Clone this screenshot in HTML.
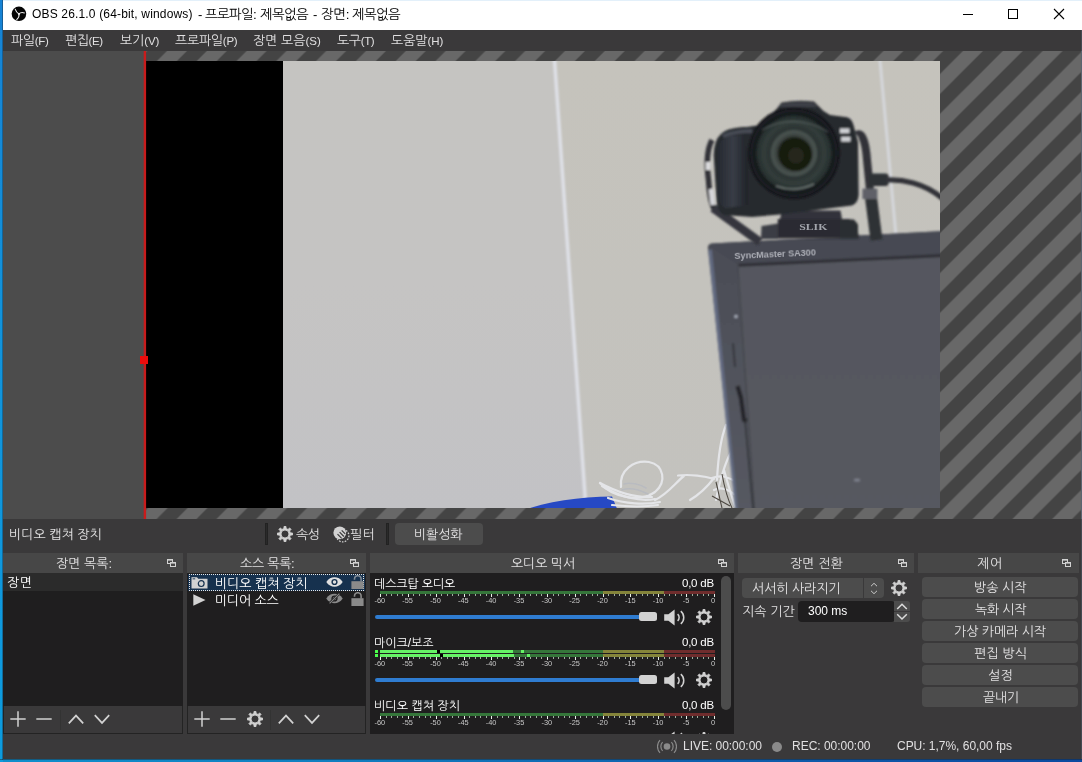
<!DOCTYPE html>
<html lang="ko">
<head>
<meta charset="utf-8">
<title>OBS 26.1.0 (64-bit, windows) - 프로파일: 제목없음 - 장면: 제목없음</title>
<style>
*{box-sizing:border-box;margin:0;padding:0}
html,body{width:1082px;height:762px;overflow:hidden}
body{background:linear-gradient(90deg,#0f8fcc 0,#107fc0 30%,#0f62ae 62%,#0c4aa0 100%);font-family:"Liberation Sans","NanumGothic","Noto Sans CJK KR",sans-serif;font-size:13px;color:#e1e0e1;position:relative}
.abs{position:absolute}
.l{font-size:11.5px}
.t{position:absolute;white-space:pre;line-height:16px;height:16px}
#win{position:absolute;left:3px;top:0;width:1079px;height:759px;background:#3a393a;overflow:hidden;transform:translateZ(0);will-change:transform}
#title{position:absolute;left:0;top:0;width:1079px;height:30px;background:#fff;color:#000}
#menu{position:absolute;left:0;top:30px;width:1079px;height:21px;background:#3a393a}
#preview{position:absolute;left:0;top:51px;width:1079px;height:468px;background:#4c4c4c;overflow:hidden}
#ctx{position:absolute;left:0;top:519px;width:1079px;height:34px;background:#3a393a}
.dock{position:absolute;top:553px;height:181px}
.dtitle{position:absolute;left:0;top:0;right:0;height:20px;background:#474747}
.dbody{position:absolute;left:0;top:20px;right:0;bottom:0;background:#1f1e1f}
.tb{position:absolute;left:0;right:0;bottom:0;height:28px;background:#3a393a;border:1px solid #232323;border-top:none}
.btn{position:absolute;background:#4c4c4c;border-radius:4px}
#status{position:absolute;left:0;top:734px;width:1079px;height:25px;background:#3a393a}
</style>
</head>
<body>
<div class="abs" style="left:0;top:0;width:3px;height:762px;background:linear-gradient(180deg,#1682d4 0,#1292da 40%,#0d9cde 100%)"></div>
<div class="abs" style="left:0;top:759px;width:1082px;height:1px;background:rgba(20,30,40,0.45)"></div>
<div class="abs" style="left:2px;top:0;width:1px;height:760px;background:rgba(20,40,60,0.4)"></div>
<div id="win">

<div id="title"><div class="abs" style="left:0;top:0;width:1079px;height:1px;background:#e3f0fa"></div>
<svg class="abs" style="left:8px;top:6px" width="16" height="16" viewBox="11 6 16 16"><circle cx="18.95" cy="13.8" r="7.3" fill="#050505"/><g fill="none" stroke="#f0f0f0" stroke-width="1.05" stroke-linecap="round"><path d="M18.97 13.95Q16.4 12.6 15.3 9.3"/><path d="M18.97 13.95Q21 11.6 24.4 12.9"/><path d="M18.97 13.95Q19.6 17.3 16.7 19.6"/></g><circle cx="18.97" cy="13.95" r="0.9" fill="#f0f0f0"/></svg>
<div class="t" style="left:29px;top:6px;font-size:12px;letter-spacing:0.163px;color:#000;">OBS 26.1.0 (64-bit, windows)</div>
<div class="t" style="left:195px;top:7px;font-size:13px;color:#000;">-</div>
<div class="t" style="left:202px;top:7px;font-size:13.5px;letter-spacing:-0.700px;color:#000;">프로파일:</div>
<div class="t" style="left:257px;top:7px;font-size:13.5px;letter-spacing:-0.700px;color:#000;">제목없음</div>
<div class="t" style="left:310px;top:7px;font-size:13px;color:#000;">-</div>
<div class="t" style="left:318px;top:7px;font-size:13.5px;letter-spacing:-0.350px;color:#000;">장면:</div>
<div class="t" style="left:349px;top:7px;font-size:13.5px;letter-spacing:-0.700px;color:#000;">제목없음</div>
<svg class="abs" style="left:952px;top:0" width="127" height="30"><path d="M8 14.5H18" stroke="#000" stroke-width="1"/><rect x="53.5" y="9.5" width="9" height="9" fill="none" stroke="#000"/><path d="M99 9L109 19M109 9L99 19" stroke="#000" stroke-width="1.1"/></svg>
</div>
<div id="menu">
<div class="t" style="left:8px;top:3px;font-size:13px;letter-spacing:-0.350px;">파일<span class="l">(F)</span></div>
<div class="t" style="left:62px;top:3px;font-size:13px;letter-spacing:-0.450px;">편집<span class="l">(E)</span></div>
<div class="t" style="left:117px;top:3px;font-size:13px;letter-spacing:-0.100px;">보기<span class="l">(V)</span></div>
<div class="t" style="left:172px;top:3px;font-size:13px;letter-spacing:-0.267px;">프로파일<span class="l">(P)</span></div>
<div class="t" style="left:250px;top:3px;font-size:13px;letter-spacing:-0.014px;">장면 모음<span class="l">(S)</span></div>
<div class="t" style="left:334px;top:3px;font-size:13px;letter-spacing:-0.375px;">도구<span class="l">(T)</span></div>
<div class="t" style="left:388px;top:3px;font-size:13px;letter-spacing:-0.040px;">도움말<span class="l">(H)</span></div>
</div>
<div id="preview">
<svg class="abs" style="left:0;top:0" width="1079" height="468" viewBox="3 51 1079 468">
<defs>
<pattern id="stripe" patternUnits="userSpaceOnUse" x="0" y="0" width="39.8" height="39.8"><rect width="39.8" height="39.8" fill="#444444"/><path d="M28.950 -39.800L-39.800 28.950M68.750 -39.800L-39.800 68.750M108.550 -39.800L-39.800 108.550M148.350 -39.800L-39.800 148.350" stroke="#686868" stroke-width="14.071" fill="none"/></pattern>
<clipPath id="photo"><rect x="283" y="61" width="657" height="447"/></clipPath>
<linearGradient id="wallL" x1="0" y1="0" x2="0" y2="1"><stop offset="0" stop-color="#c5c4c1"/><stop offset="0.5" stop-color="#c5c4c3"/><stop offset="1" stop-color="#c2c2c5"/></linearGradient>
<linearGradient id="wallR" x1="0" y1="0" x2="0" y2="1"><stop offset="0" stop-color="#c5c3bc"/><stop offset="1" stop-color="#c3c2be"/></linearGradient>
<radialGradient id="lens" cx="0.5" cy="0.5" r="0.5"><stop offset="0" stop-color="#15160f"/><stop offset="0.34" stop-color="#1b1d17"/><stop offset="0.40" stop-color="#3a413e"/><stop offset="0.50" stop-color="#4b5552"/><stop offset="0.56" stop-color="#2b3332"/><stop offset="0.70" stop-color="#323d3b"/><stop offset="0.84" stop-color="#27302f"/><stop offset="0.90" stop-color="#15181b"/><stop offset="1" stop-color="#1d2025"/></radialGradient>
<linearGradient id="screen" x1="0" y1="0" x2="0" y2="1"><stop offset="0" stop-color="#54565e"/><stop offset="0.5" stop-color="#56585f"/><stop offset="1" stop-color="#585a60"/></linearGradient>
<linearGradient id="bezel" x1="0" y1="0" x2="0" y2="1"><stop offset="0" stop-color="#4a4c55"/><stop offset="0.4" stop-color="#50525b"/><stop offset="1" stop-color="#575a63"/></linearGradient>
<linearGradient id="grip" x1="0" y1="0" x2="1" y2="0"><stop offset="0" stop-color="#262a31"/><stop offset="0.5" stop-color="#3a3f49"/><stop offset="1" stop-color="#1f2227"/></linearGradient>
<filter id="b1" x="-10%" y="-10%" width="120%" height="120%"><feGaussianBlur stdDeviation="0.7"/></filter>
<filter id="b3" x="-10%" y="-10%" width="120%" height="120%"><feGaussianBlur stdDeviation="0.9"/></filter>
<filter id="b2" x="-10%" y="-10%" width="120%" height="120%"><feGaussianBlur stdDeviation="1.1"/></filter>
</defs>
<rect x="146" y="51" width="936" height="468" fill="url(#stripe)"/>
<rect x="146" y="61" width="137" height="447" fill="#000"/>
<g clip-path="url(#photo)">
<rect x="283" y="61" width="657" height="447" fill="url(#wallR)"/>
<path d="M283 61H553.5L586 508H283Z" fill="url(#wallL)"/>
<g filter="url(#b3)">
<path d="M554.3 57L585.4 501" stroke="#dfe1e8" stroke-width="3.4" fill="none"/>
<path d="M879.7 57L896 236" stroke="#d6d8dd" stroke-width="2.8" fill="none"/>
</g>
<path d="M510 516C535 503 575 497 612 496.5L620 516Z" fill="#2849c4" filter="url(#b1)"/>
<g fill="none" stroke="#e4e5e8" stroke-width="2.2" stroke-linecap="round" filter="url(#b1)">
<path d="M621 487C619 470 634 460 649 462C664 465 667 482 655 492C640 503 612 497 600 483"/>
<path d="M600 483C615 491 635 498 652 497M602 486C620 497 640 502 655 499M608 498C625 504 645 505 660 502M612 505C630 507 645 507 658 505"/>
<path d="M624 484C630 482 640 484 646 488M622 490C630 487 640 490 648 494" stroke="#b9bbc0" stroke-width="1.6"/>
<path d="M655 500C668 494 676 482 684 476M678 475.5C690 474 705 476 714 479M690 500C700 494 708 486 714 478"/>
<path d="M717 480C718 460 720 440 726 425M716 500C720 480 724 465 731 452M724 470C728 485 732 497 735 506M712 478C722 474 728 478 733 480M714 490C722 486 728 490 734 494"/>
</g>
<path d="M640 506.5H712" stroke="#2a2a2c" stroke-width="2" filter="url(#b1)"/>
<path d="M716 482C718 490 720 500 722 508M722 474C724 485 728 500 732 508M712 496L730 506" stroke="#4d4842" stroke-width="1.1" fill="none" filter="url(#b1)"/>
<g filter="url(#b2)">
<path d="M708 249Q707 244 712 243.5L962 230V530H737.5L735.5 510Z" fill="url(#bezel)"/>
<path d="M709 246Q709 244 712 243.5L962 230V255L738.3 265Z" fill="#474952"/>
<path d="M708.3 250L711.8 249.5L740 530H737Z" fill="#68728c" opacity="0.8"/>
<path d="M738.3 264.8L962 254.3V530H756Z" fill="url(#screen)"/>
<path d="M738.5 265.2L962 254.7" stroke="#2d2e34" stroke-width="3" fill="none"/>
<path d="M737.5 262.5L756 530" stroke="#46484f" stroke-width="1.6" fill="none"/>
<path d="M737.5 386L741 398L744 420L747 421" stroke="#26272b" stroke-width="4.5" fill="none" stroke-linejoin="round"/>
<path d="M745 420L754.5 525" stroke="#2f3035" stroke-width="1.6" fill="none"/>
<path d="M733 343L735 367" stroke="#35373d" stroke-width="2" fill="none"/>
<circle cx="736" cy="316.5" r="1.7" fill="#a4a9b6"/>
<ellipse cx="857" cy="480" rx="3" ry="1.5" fill="#7d808c"/>
</g>
<text x="734.5" y="259" font-family="Liberation Sans,sans-serif" font-weight="bold" font-size="9.5" fill="#aeb0b8" textLength="81.5" lengthAdjust="spacingAndGlyphs" transform="rotate(-2.6 734.5 259)" filter="url(#b1)">SyncMaster SA300</text>
<g filter="url(#b3)">
<path d="M712 140C706.5 150 706.5 165 708.5 180C709.5 195 711 205 715 210" fill="none" stroke="#303237" stroke-width="5.5"/>
<path d="M713 208L760 242" fill="none" stroke="#34363c" stroke-width="8.5"/>
<rect x="705.8" y="162" width="4.6" height="8" fill="#dcdcde"/><rect x="709.6" y="189" width="4.6" height="16" fill="#d6d6da" transform="rotate(-7 712 197)"/>
<path d="M857 135C863 131 866 146 867 160L870 190" fill="none" stroke="#303237" stroke-width="8"/>
<path d="M870 190L876.5 240" fill="none" stroke="#2e3035" stroke-width="12"/>
<rect x="862.4" y="188.6" width="15" height="10.5" fill="#5e6068"/>
<rect x="869" y="173.6" width="19.5" height="12.4" rx="3" fill="#2f3136"/>
<path d="M886 180C902 179 924 183 942 198L958 212" fill="none" stroke="#303237" stroke-width="5.2"/>
<path d="M782 210.5h58.5l1.5 8.5h-62z" fill="#30333a"/>
<path d="M777.8 219h72.2l1 3.5l6 2l2 14h-81.2z" fill="#292b30"/>
<path d="M761.5 226l16.5-2.5v15.5h-17z" fill="#3a3d45"/>
<path d="M840 219.6h14l4 5v14h-18z" fill="#2b2d33"/>
<path d="M721 134C726 129 736 127 747 127L760 125L777 108.5L781.5 102.5Q797 99.5 814 101.5L823.5 111L830 115L847 117.3Q852 119 853.5 125L858 142L858.7 195Q858 203 852 205.5L780 214.5L752 217L724 215Q717.5 212 716.5 201L713.7 155Q714 140 721 134Z" fill="#282a2f"/>
<path d="M718 150Q720 138 730 136L745 135Q749 160 748 205L726 208Q719 206 718.5 196Z" fill="url(#grip)" opacity="0.9"/>
<path d="M722 134.5Q735 129 752 129L752 133Q735 133 724 138Z" fill="#474b55"/>
<path d="M782 103.5Q797 100.5 813 102.5L818 107H779Z" fill="#3d4047"/>
<circle cx="794" cy="153.2" r="46.2" fill="#17191d"/>
<circle cx="794" cy="153.2" r="43.5" fill="url(#lens)"/>
<circle cx="795.5" cy="154.5" r="16.5" fill="#181a11"/>
<circle cx="796" cy="155.5" r="8" fill="#25271b"/>
<path d="M776 186Q795 193 814 184" stroke="#9aa19f" stroke-width="1.4" fill="none" opacity="0.6"/>
<path d="M762 130Q795 112 828 132" stroke="#7d8583" stroke-width="1.2" fill="none" opacity="0.45"/>
<rect x="840" y="128.4" width="9.5" height="4.8" fill="#d0d1d5"/><rect x="841.2" y="136.8" width="9.3" height="4.8" fill="#d0d1d5"/>
</g>
<text x="799.3" y="229.8" font-family="Liberation Serif,serif" font-weight="bold" font-size="8.6" fill="#a3a5ac" textLength="28" lengthAdjust="spacingAndGlyphs" filter="url(#b1)">SLIK</text>
</g>
<rect x="143.7" y="51" width="2.4" height="468" fill="#c81c1c"/>
<rect x="140" y="356" width="8" height="8" fill="#ee0c0c"/>
</svg>
</div>
<div id="ctx">
<div class="t" style="left:6px;top:8px;font-size:13px;">비디오 캡쳐 장치</div>
<div class="abs" style="left:262px;top:4px;width:3px;height:22px;background:#2a2a2a;border:1px solid #222"></div>
<svg class="abs" style="left:274.3px;top:7px" width="16" height="16" viewBox="0 0 16 16"><path d="M6.93,2.61 L6.99,0.47 L9.01,0.47 L9.07,2.61 L11.06,3.43 L12.61,1.96 L14.04,3.39 L12.57,4.94 L13.39,6.93 L15.53,6.99 L15.53,9.01 L13.39,9.07 L12.57,11.06 L14.04,12.61 L12.61,14.04 L11.06,12.57 L9.07,13.39 L9.01,15.53 L6.99,15.53 L6.93,13.39 L4.94,12.57 L3.39,14.04 L1.96,12.61 L3.43,11.06 L2.61,9.07 L0.47,9.01 L0.47,6.99 L2.61,6.93 L3.43,4.94 L1.96,3.39 L3.39,1.96 L4.94,3.43Z M4.00,8.00 a4.0,4.0 0 1,0 8.0,0 a4.0,4.0 0 1,0 -8.0,0Z" fill="#d2d2d2" fill-rule="evenodd" stroke="#d2d2d2" stroke-width="0.9" stroke-linejoin="round"/></svg>
<div class="t" style="left:293px;top:8px;font-size:13px;letter-spacing:-0.700px;">속성</div>
<svg class="abs" style="left:330px;top:7px" width="17" height="17" viewBox="0 0 17 17"><circle cx="9.7" cy="9.7" r="6.2" fill="none" stroke="#d2d2d2" stroke-width="1.3" stroke-dasharray="1.6 1.3"/><circle cx="6.8" cy="6.8" r="6.4" fill="#d2d2d2"/><path d="M4.5 8.2l4.2 4.2M6.6 6.2l4.3 4.3M8.7 4.3l3.5 3.5" stroke="#3a393a" stroke-width="1.2"/></svg>
<div class="t" style="left:347px;top:8px;font-size:13px;letter-spacing:0.700px;">필터</div>
<div class="abs" style="left:383px;top:4px;width:3px;height:22px;background:#2a2a2a;border:1px solid #222"></div>
<div class="btn" style="left:392px;top:4px;width:88px;height:22px"></div>
<div class="t" style="left:411px;top:8px;font-size:13px;letter-spacing:-0.100px;">비활성화</div>
</div>
<div class="dock" style="left:0px;width:180px"><div class="dtitle"><div class="t" style="left:53px;top:3px;font-size:13px;letter-spacing:-0.020px;">장면 목록:</div><svg class="abs" style="left:163.5px;top:5.6px" width="9" height="8" viewBox="0 0 9 8"><rect x="0.5" y="0.5" width="5" height="4" fill="none" stroke="#d2d2d2"/><rect x="0" y="0" width="6" height="1.6" fill="#d2d2d2"/><rect x="3.5" y="3.5" width="5" height="4" fill="#474747" stroke="#d2d2d2"/><rect x="3" y="3" width="6" height="1.6" fill="#d2d2d2"/></svg></div><div class="dbody"><div class="abs" style="left:0;top:0;right:0;height:18px;background:#2b2b2b"></div><div class="t" style="left:4px;top:2px;font-size:13px;letter-spacing:0.700px;color:#fff;">장면</div><div class="tb"><svg class="abs" style="left:6px;top:5px" width="16" height="16"><path d="M8 0.3V15.7M0.3 8H15.7" stroke="#d2d2d2" stroke-width="1.5" fill="none"/></svg><svg class="abs" style="left:32px;top:5px" width="16" height="16"><path d="M0.3 8H15.7" stroke="#d2d2d2" stroke-width="1.5" fill="none"/></svg><div class="abs" style="left:56px;top:4px;width:1px;height:20px;background:#333"></div><svg class="abs" style="left:64px;top:5px" width="16" height="16"><path d="M0.8 12.3L8 4.6L15.2 12.3" stroke="#d2d2d2" stroke-width="1.7" fill="none"/></svg><svg class="abs" style="left:90px;top:5px" width="16" height="16"><path d="M0.8 4.2L8 11.9L15.2 4.2" stroke="#d2d2d2" stroke-width="1.7" fill="none"/></svg></div></div></div>
<div class="dock" style="left:184px;width:179px"><div class="dtitle"><div class="t" style="left:53px;top:3px;font-size:13px;letter-spacing:-0.280px;">소스 목록:</div><svg class="abs" style="left:162.5px;top:5.6px" width="9" height="8" viewBox="0 0 9 8"><rect x="0.5" y="0.5" width="5" height="4" fill="none" stroke="#d2d2d2"/><rect x="0" y="0" width="6" height="1.6" fill="#d2d2d2"/><rect x="3.5" y="3.5" width="5" height="4" fill="#474747" stroke="#d2d2d2"/><rect x="3" y="3" width="6" height="1.6" fill="#d2d2d2"/></svg></div><div class="dbody"><div class="abs" style="left:1px;top:0.5px;width:176.5px;height:17.7px;background:#16314e"></div><div class="abs" style="left:1.5px;top:1px;width:175.5px;height:17px;border:1px dotted #e8e8e8"></div><div class="abs" style="left:1px;top:18px;right:1px;height:17px;background:#1f1e1f"></div><svg class="abs" style="left:3.7px;top:2.6px" width="17" height="13" viewBox="0 0 17 13"><path d="M0.5 1.2h5.5l1.2 1.6h9.3v9.7h-16z" fill="#d2d2d2"/><circle cx="10.2" cy="7.6" r="2.9" fill="none" stroke="#16314e" stroke-width="1.2"/><rect x="1.6" y="2.4" width="2.6" height="0.9" fill="#16314e"/></svg><div class="t" style="left:28px;top:3px;font-size:13px;letter-spacing:-0.038px;color:#fff;">비디오 캡쳐 장치</div><svg class="abs" style="left:138.60000000000002px;top:3.8px" width="17" height="10" viewBox="0 0 17 10"><path d="M0.3 5C2.5 1.6 5.3 0.3 8.5 0.3S14.5 1.6 16.7 5C14.5 8.4 11.7 9.7 8.5 9.7S2.5 8.4 0.3 5Z" fill="#e0e0e0"/><circle cx="8.5" cy="5" r="3.1" fill="#16314e"/><circle cx="8.5" cy="5" r="1.7" fill="#e0e0e0"/></svg><svg class="abs" style="left:163.5px;top:2px" width="13" height="14" viewBox="0 0 13 14"><rect x="0.4" y="6.2" width="12.2" height="7.8" fill="#8a8a8a"/><path d="M10.1 6.4V4a3.3 3.3 0 0 0 -6.6 0V4.8" fill="none" stroke="#808a95" stroke-width="1.6"/></svg><svg class="abs" style="left:5.5px;top:20.5px" width="13" height="12" viewBox="0 0 13 12"><path d="M0.3 0.3L12.5 6L0.3 11.7Z" fill="#d2d2d2"/></svg><div class="t" style="left:28px;top:20px;font-size:13px;letter-spacing:-0.220px;color:#fff;">미디어 소스</div><svg class="abs" style="left:138.60000000000002px;top:20.3px" width="17" height="11" viewBox="0 0 17 11"><path d="M0.3 5.5C2.5 2.1 5.3 0.8 8.5 0.8S14.5 2.1 16.7 5.5C14.5 8.9 11.7 10.2 8.5 10.2S2.5 8.9 0.3 5.5Z" fill="#8a8a8a"/><circle cx="8.5" cy="5.5" r="3.1" fill="#1f1e1f"/><circle cx="8.5" cy="5.5" r="1.7" fill="#8a8a8a"/><path d="M3.2 10.6L13.6 0.4" stroke="#1f1e1f" stroke-width="2.4"/><path d="M3.6 10.4L13.4 0.6" stroke="#8a8a8a" stroke-width="1.1"/></svg><svg class="abs" style="left:163.5px;top:19px" width="13" height="14" viewBox="0 0 13 14"><rect x="0.4" y="6.2" width="12.2" height="7.8" fill="#8a8a8a"/><path d="M10.1 6.4V4a3.3 3.3 0 0 0 -6.6 0V4.8" fill="none" stroke="#8a8a8a" stroke-width="1.6"/></svg><div class="tb"><svg class="abs" style="left:6px;top:5px" width="16" height="16"><path d="M8 0.3V15.7M0.3 8H15.7" stroke="#d2d2d2" stroke-width="1.5" fill="none"/></svg><svg class="abs" style="left:32px;top:5px" width="16" height="16"><path d="M0.3 8H15.7" stroke="#d2d2d2" stroke-width="1.5" fill="none"/></svg><svg class="abs" style="left:58.5px;top:5px" width="16" height="16" viewBox="0 0 16 16"><path d="M6.93,2.61 L6.99,0.47 L9.01,0.47 L9.07,2.61 L11.06,3.43 L12.61,1.96 L14.04,3.39 L12.57,4.94 L13.39,6.93 L15.53,6.99 L15.53,9.01 L13.39,9.07 L12.57,11.06 L14.04,12.61 L12.61,14.04 L11.06,12.57 L9.07,13.39 L9.01,15.53 L6.99,15.53 L6.93,13.39 L4.94,12.57 L3.39,14.04 L1.96,12.61 L3.43,11.06 L2.61,9.07 L0.47,9.01 L0.47,6.99 L2.61,6.93 L3.43,4.94 L1.96,3.39 L3.39,1.96 L4.94,3.43Z M4.00,8.00 a4.0,4.0 0 1,0 8.0,0 a4.0,4.0 0 1,0 -8.0,0Z" fill="#d2d2d2" fill-rule="evenodd" stroke="#d2d2d2" stroke-width="0.9" stroke-linejoin="round"/></svg><div class="abs" style="left:82px;top:4px;width:1px;height:20px;background:#333"></div><svg class="abs" style="left:90px;top:5px" width="16" height="16"><path d="M0.8 12.3L8 4.6L15.2 12.3" stroke="#d2d2d2" stroke-width="1.7" fill="none"/></svg><svg class="abs" style="left:116px;top:5px" width="16" height="16"><path d="M0.8 4.2L8 11.9L15.2 4.2" stroke="#d2d2d2" stroke-width="1.7" fill="none"/></svg></div></div></div>
<div class="dock" style="left:367px;width:364px"><div class="dtitle"><div class="t" style="left:141px;top:3px;font-size:13px;letter-spacing:-0.120px;">오디오 믹서</div><svg class="abs" style="left:347.5px;top:5.6px" width="9" height="8" viewBox="0 0 9 8"><rect x="0.5" y="0.5" width="5" height="4" fill="none" stroke="#d2d2d2"/><rect x="0" y="0" width="6" height="1.6" fill="#d2d2d2"/><rect x="3.5" y="3.5" width="5" height="4" fill="#474747" stroke="#d2d2d2"/><rect x="3" y="3" width="6" height="1.6" fill="#d2d2d2"/></svg></div><div class="dbody"><div class="t" style="left:4px;top:3px;font-size:12px;letter-spacing:-0.129px;color:#fff;">데스크탑 오디오</div><div class="t" style="left:312px;top:2px;font-size:11.5px;letter-spacing:-0.240px;color:#fff;">0,0 dB</div><div class="abs" style="left:10px;top:18px;width:335px;height:3px;background:linear-gradient(90deg,#35763a 0,#35763a 222.89999999999998px,#84843a 222.89999999999998px,#84843a 284px,#6f2d2d 284px)"></div><svg class="abs" style="left:0;top:21px" width="364" height="12"><path d="M10.5 0V3M38.5 0V3M66.5 0V3M94.5 0V3M121.5 0V3M149.5 0V3M177.5 0V3M205.5 0V3M233.5 0V3M260.5 0V3M288.5 0V3M316.5 0V3M344.5 0V3" stroke="#eaf2ea" stroke-width="1" fill="none"/><path d="M16.5 0V2M21.5 0V2M27.5 0V2M32.5 0V2M43.5 0V2M49.5 0V2M55.5 0V2M60.5 0V2M71.5 0V2M77.5 0V2M82.5 0V2M88.5 0V2M99.5 0V2M105.5 0V2M110.5 0V2M116.5 0V2M127.5 0V2M132.5 0V2M138.5 0V2M144.5 0V2M155.5 0V2M160.5 0V2M166.5 0V2M171.5 0V2M183.5 0V2M188.5 0V2M194.5 0V2M199.5 0V2M210.5 0V2M216.5 0V2M222.5 0V2M227.5 0V2M238.5 0V2M244.5 0V2M249.5 0V2M255.5 0V2M266.5 0V2M272.5 0V2M277.5 0V2M283.5 0V2M294.5 0V2M299.5 0V2M305.5 0V2M311.5 0V2M322.5 0V2M327.5 0V2M333.5 0V2M338.5 0V2" stroke="#9fb09f" stroke-width="1" fill="none"/><text x="9.80" y="9" font-size="7.4" text-anchor="middle" fill="#c8c8c8" font-family="Liberation Sans,sans-serif">-60</text><text x="37.63" y="9" font-size="7.4" text-anchor="middle" fill="#c8c8c8" font-family="Liberation Sans,sans-serif">-55</text><text x="65.47" y="9" font-size="7.4" text-anchor="middle" fill="#c8c8c8" font-family="Liberation Sans,sans-serif">-50</text><text x="93.30" y="9" font-size="7.4" text-anchor="middle" fill="#c8c8c8" font-family="Liberation Sans,sans-serif">-45</text><text x="121.13" y="9" font-size="7.4" text-anchor="middle" fill="#c8c8c8" font-family="Liberation Sans,sans-serif">-40</text><text x="148.97" y="9" font-size="7.4" text-anchor="middle" fill="#c8c8c8" font-family="Liberation Sans,sans-serif">-35</text><text x="176.80" y="9" font-size="7.4" text-anchor="middle" fill="#c8c8c8" font-family="Liberation Sans,sans-serif">-30</text><text x="204.63" y="9" font-size="7.4" text-anchor="middle" fill="#c8c8c8" font-family="Liberation Sans,sans-serif">-25</text><text x="232.47" y="9" font-size="7.4" text-anchor="middle" fill="#c8c8c8" font-family="Liberation Sans,sans-serif">-20</text><text x="260.30" y="9" font-size="7.4" text-anchor="middle" fill="#c8c8c8" font-family="Liberation Sans,sans-serif">-15</text><text x="288.13" y="9" font-size="7.4" text-anchor="middle" fill="#c8c8c8" font-family="Liberation Sans,sans-serif">-10</text><text x="315.97" y="9" font-size="7.4" text-anchor="middle" fill="#c8c8c8" font-family="Liberation Sans,sans-serif">-5</text><text x="345.2" y="9" font-size="7.4" text-anchor="end" fill="#c8c8c8" font-family="Liberation Sans,sans-serif">0</text></svg><div class="abs" style="left:5px;top:41.5px;width:270px;height:4.8px;border-radius:2.4px;background:#2f7cd0"></div><div class="abs" style="left:268.5px;top:39.4px;width:18.6px;height:8.6px;border-radius:2.5px;background:#d2d2d2"></div><svg class="abs" style="left:294px;top:35.5px" width="23" height="17" viewBox="0 0 23 17"><path d="M0.2 5.2h4.2L10.6 0.4v16.2L4.4 11.8H0.2z" fill="#d2d2d2"/><path d="M13.6 5.2a4.3 4.3 0 0 1 0 6.6" fill="none" stroke="#d2d2d2" stroke-width="1.5"/><path d="M16.8 2.2a8.2 8.2 0 0 1 0 12.6" fill="none" stroke="#d2d2d2" stroke-width="1.5"/></svg><svg class="abs" style="left:326px;top:36.0px" width="16" height="16" viewBox="0 0 16 16"><path d="M6.93,2.61 L6.99,0.47 L9.01,0.47 L9.07,2.61 L11.06,3.43 L12.61,1.96 L14.04,3.39 L12.57,4.94 L13.39,6.93 L15.53,6.99 L15.53,9.01 L13.39,9.07 L12.57,11.06 L14.04,12.61 L12.61,14.04 L11.06,12.57 L9.07,13.39 L9.01,15.53 L6.99,15.53 L6.93,13.39 L4.94,12.57 L3.39,14.04 L1.96,12.61 L3.43,11.06 L2.61,9.07 L0.47,9.01 L0.47,6.99 L2.61,6.93 L3.43,4.94 L1.96,3.39 L3.39,1.96 L4.94,3.43Z M4.00,8.00 a4.0,4.0 0 1,0 8.0,0 a4.0,4.0 0 1,0 -8.0,0Z" fill="#d2d2d2" fill-rule="evenodd" stroke="#d2d2d2" stroke-width="0.9" stroke-linejoin="round"/></svg><div class="t" style="left:4px;top:62px;font-size:12px;letter-spacing:-0.040px;color:#fff;">마이크/보조</div><div class="t" style="left:312px;top:61px;font-size:11.5px;letter-spacing:-0.240px;color:#fff;">0,0 dB</div><div class="abs" style="left:10px;top:77px;width:335px;height:3px;background:linear-gradient(90deg,#35763a 0,#35763a 222.89999999999998px,#84843a 222.89999999999998px,#84843a 284px,#6f2d2d 284px)"></div><div class="abs" style="left:10px;top:81px;width:335px;height:3px;background:linear-gradient(90deg,#35763a 0,#35763a 222.89999999999998px,#84843a 222.89999999999998px,#84843a 284px,#6f2d2d 284px)"></div><div class="abs" style="left:5px;top:77px;width:3px;height:3px;background:#4cff4c"></div><div class="abs" style="left:5px;top:81px;width:3px;height:3px;background:#4cff4c"></div><div class="abs" style="left:10px;top:77px;width:133px;height:3px;background:#66f266"></div><div class="abs" style="left:10px;top:81px;width:134px;height:3px;background:#66f266"></div><div class="abs" style="left:67px;top:77px;width:3px;height:3px;background:#000"></div><div class="abs" style="left:70px;top:81px;width:3px;height:3px;background:#000"></div><div class="abs" style="left:151px;top:77px;width:3px;height:3px;background:#66f266"></div><div class="abs" style="left:157px;top:81px;width:3px;height:3px;background:#66f266"></div><svg class="abs" style="left:0;top:84px" width="364" height="12"><path d="M10.5 0V3M38.5 0V3M66.5 0V3M94.5 0V3M121.5 0V3M149.5 0V3M177.5 0V3M205.5 0V3M233.5 0V3M260.5 0V3M288.5 0V3M316.5 0V3M344.5 0V3" stroke="#eaf2ea" stroke-width="1" fill="none"/><path d="M16.5 0V2M21.5 0V2M27.5 0V2M32.5 0V2M43.5 0V2M49.5 0V2M55.5 0V2M60.5 0V2M71.5 0V2M77.5 0V2M82.5 0V2M88.5 0V2M99.5 0V2M105.5 0V2M110.5 0V2M116.5 0V2M127.5 0V2M132.5 0V2M138.5 0V2M144.5 0V2M155.5 0V2M160.5 0V2M166.5 0V2M171.5 0V2M183.5 0V2M188.5 0V2M194.5 0V2M199.5 0V2M210.5 0V2M216.5 0V2M222.5 0V2M227.5 0V2M238.5 0V2M244.5 0V2M249.5 0V2M255.5 0V2M266.5 0V2M272.5 0V2M277.5 0V2M283.5 0V2M294.5 0V2M299.5 0V2M305.5 0V2M311.5 0V2M322.5 0V2M327.5 0V2M333.5 0V2M338.5 0V2" stroke="#9fb09f" stroke-width="1" fill="none"/><text x="9.80" y="9" font-size="7.4" text-anchor="middle" fill="#c8c8c8" font-family="Liberation Sans,sans-serif">-60</text><text x="37.63" y="9" font-size="7.4" text-anchor="middle" fill="#c8c8c8" font-family="Liberation Sans,sans-serif">-55</text><text x="65.47" y="9" font-size="7.4" text-anchor="middle" fill="#c8c8c8" font-family="Liberation Sans,sans-serif">-50</text><text x="93.30" y="9" font-size="7.4" text-anchor="middle" fill="#c8c8c8" font-family="Liberation Sans,sans-serif">-45</text><text x="121.13" y="9" font-size="7.4" text-anchor="middle" fill="#c8c8c8" font-family="Liberation Sans,sans-serif">-40</text><text x="148.97" y="9" font-size="7.4" text-anchor="middle" fill="#c8c8c8" font-family="Liberation Sans,sans-serif">-35</text><text x="176.80" y="9" font-size="7.4" text-anchor="middle" fill="#c8c8c8" font-family="Liberation Sans,sans-serif">-30</text><text x="204.63" y="9" font-size="7.4" text-anchor="middle" fill="#c8c8c8" font-family="Liberation Sans,sans-serif">-25</text><text x="232.47" y="9" font-size="7.4" text-anchor="middle" fill="#c8c8c8" font-family="Liberation Sans,sans-serif">-20</text><text x="260.30" y="9" font-size="7.4" text-anchor="middle" fill="#c8c8c8" font-family="Liberation Sans,sans-serif">-15</text><text x="288.13" y="9" font-size="7.4" text-anchor="middle" fill="#c8c8c8" font-family="Liberation Sans,sans-serif">-10</text><text x="315.97" y="9" font-size="7.4" text-anchor="middle" fill="#c8c8c8" font-family="Liberation Sans,sans-serif">-5</text><text x="345.2" y="9" font-size="7.4" text-anchor="end" fill="#c8c8c8" font-family="Liberation Sans,sans-serif">0</text></svg><div class="abs" style="left:5px;top:104.5px;width:270px;height:4.8px;border-radius:2.4px;background:#2f7cd0"></div><div class="abs" style="left:268.5px;top:102.4px;width:18.6px;height:8.6px;border-radius:2.5px;background:#d2d2d2"></div><svg class="abs" style="left:294px;top:98.5px" width="23" height="17" viewBox="0 0 23 17"><path d="M0.2 5.2h4.2L10.6 0.4v16.2L4.4 11.8H0.2z" fill="#d2d2d2"/><path d="M13.6 5.2a4.3 4.3 0 0 1 0 6.6" fill="none" stroke="#d2d2d2" stroke-width="1.5"/><path d="M16.8 2.2a8.2 8.2 0 0 1 0 12.6" fill="none" stroke="#d2d2d2" stroke-width="1.5"/></svg><svg class="abs" style="left:326px;top:99.0px" width="16" height="16" viewBox="0 0 16 16"><path d="M6.93,2.61 L6.99,0.47 L9.01,0.47 L9.07,2.61 L11.06,3.43 L12.61,1.96 L14.04,3.39 L12.57,4.94 L13.39,6.93 L15.53,6.99 L15.53,9.01 L13.39,9.07 L12.57,11.06 L14.04,12.61 L12.61,14.04 L11.06,12.57 L9.07,13.39 L9.01,15.53 L6.99,15.53 L6.93,13.39 L4.94,12.57 L3.39,14.04 L1.96,12.61 L3.43,11.06 L2.61,9.07 L0.47,9.01 L0.47,6.99 L2.61,6.93 L3.43,4.94 L1.96,3.39 L3.39,1.96 L4.94,3.43Z M4.00,8.00 a4.0,4.0 0 1,0 8.0,0 a4.0,4.0 0 1,0 -8.0,0Z" fill="#d2d2d2" fill-rule="evenodd" stroke="#d2d2d2" stroke-width="0.9" stroke-linejoin="round"/></svg><div class="t" style="left:4px;top:125px;font-size:12px;letter-spacing:0.050px;color:#fff;">비디오 캡쳐 장치</div><div class="t" style="left:312px;top:124px;font-size:11.5px;letter-spacing:-0.240px;color:#fff;">0,0 dB</div><div class="abs" style="left:10px;top:140px;width:335px;height:3px;background:linear-gradient(90deg,#35763a 0,#35763a 222.89999999999998px,#84843a 222.89999999999998px,#84843a 284px,#6f2d2d 284px)"></div><svg class="abs" style="left:0;top:143px" width="364" height="12"><path d="M10.5 0V3M38.5 0V3M66.5 0V3M94.5 0V3M121.5 0V3M149.5 0V3M177.5 0V3M205.5 0V3M233.5 0V3M260.5 0V3M288.5 0V3M316.5 0V3M344.5 0V3" stroke="#eaf2ea" stroke-width="1" fill="none"/><path d="M16.5 0V2M21.5 0V2M27.5 0V2M32.5 0V2M43.5 0V2M49.5 0V2M55.5 0V2M60.5 0V2M71.5 0V2M77.5 0V2M82.5 0V2M88.5 0V2M99.5 0V2M105.5 0V2M110.5 0V2M116.5 0V2M127.5 0V2M132.5 0V2M138.5 0V2M144.5 0V2M155.5 0V2M160.5 0V2M166.5 0V2M171.5 0V2M183.5 0V2M188.5 0V2M194.5 0V2M199.5 0V2M210.5 0V2M216.5 0V2M222.5 0V2M227.5 0V2M238.5 0V2M244.5 0V2M249.5 0V2M255.5 0V2M266.5 0V2M272.5 0V2M277.5 0V2M283.5 0V2M294.5 0V2M299.5 0V2M305.5 0V2M311.5 0V2M322.5 0V2M327.5 0V2M333.5 0V2M338.5 0V2" stroke="#9fb09f" stroke-width="1" fill="none"/><text x="9.80" y="9" font-size="7.4" text-anchor="middle" fill="#c8c8c8" font-family="Liberation Sans,sans-serif">-60</text><text x="37.63" y="9" font-size="7.4" text-anchor="middle" fill="#c8c8c8" font-family="Liberation Sans,sans-serif">-55</text><text x="65.47" y="9" font-size="7.4" text-anchor="middle" fill="#c8c8c8" font-family="Liberation Sans,sans-serif">-50</text><text x="93.30" y="9" font-size="7.4" text-anchor="middle" fill="#c8c8c8" font-family="Liberation Sans,sans-serif">-45</text><text x="121.13" y="9" font-size="7.4" text-anchor="middle" fill="#c8c8c8" font-family="Liberation Sans,sans-serif">-40</text><text x="148.97" y="9" font-size="7.4" text-anchor="middle" fill="#c8c8c8" font-family="Liberation Sans,sans-serif">-35</text><text x="176.80" y="9" font-size="7.4" text-anchor="middle" fill="#c8c8c8" font-family="Liberation Sans,sans-serif">-30</text><text x="204.63" y="9" font-size="7.4" text-anchor="middle" fill="#c8c8c8" font-family="Liberation Sans,sans-serif">-25</text><text x="232.47" y="9" font-size="7.4" text-anchor="middle" fill="#c8c8c8" font-family="Liberation Sans,sans-serif">-20</text><text x="260.30" y="9" font-size="7.4" text-anchor="middle" fill="#c8c8c8" font-family="Liberation Sans,sans-serif">-15</text><text x="288.13" y="9" font-size="7.4" text-anchor="middle" fill="#c8c8c8" font-family="Liberation Sans,sans-serif">-10</text><text x="315.97" y="9" font-size="7.4" text-anchor="middle" fill="#c8c8c8" font-family="Liberation Sans,sans-serif">-5</text><text x="345.2" y="9" font-size="7.4" text-anchor="end" fill="#c8c8c8" font-family="Liberation Sans,sans-serif">0</text></svg><div class="abs" style="left:0;top:158px;width:364px;height:3px;overflow:hidden"><div class="abs" style="left:5px;top:6px;width:270px;height:4.8px;border-radius:2.4px;background:#2f7cd0"></div><div class="abs" style="left:268.5px;top:3.9px;width:18.6px;height:8.6px;border-radius:2.5px;background:#d2d2d2"></div><svg class="abs" style="left:294px;top:0px" width="23" height="17" viewBox="0 0 23 17"><path d="M0.2 5.2h4.2L10.6 0.4v16.2L4.4 11.8H0.2z" fill="#d2d2d2"/><path d="M13.6 5.2a4.3 4.3 0 0 1 0 6.6" fill="none" stroke="#d2d2d2" stroke-width="1.5"/><path d="M16.8 2.2a8.2 8.2 0 0 1 0 12.6" fill="none" stroke="#d2d2d2" stroke-width="1.5"/></svg><svg class="abs" style="left:326px;top:0.5px" width="16" height="16" viewBox="0 0 16 16"><path d="M6.93,2.61 L6.99,0.47 L9.01,0.47 L9.07,2.61 L11.06,3.43 L12.61,1.96 L14.04,3.39 L12.57,4.94 L13.39,6.93 L15.53,6.99 L15.53,9.01 L13.39,9.07 L12.57,11.06 L14.04,12.61 L12.61,14.04 L11.06,12.57 L9.07,13.39 L9.01,15.53 L6.99,15.53 L6.93,13.39 L4.94,12.57 L3.39,14.04 L1.96,12.61 L3.43,11.06 L2.61,9.07 L0.47,9.01 L0.47,6.99 L2.61,6.93 L3.43,4.94 L1.96,3.39 L3.39,1.96 L4.94,3.43Z M4.00,8.00 a4.0,4.0 0 1,0 8.0,0 a4.0,4.0 0 1,0 -8.0,0Z" fill="#d2d2d2" fill-rule="evenodd" stroke="#d2d2d2" stroke-width="0.9" stroke-linejoin="round"/></svg></div><div class="abs" style="left:351px;top:3px;width:10px;height:134px;border-radius:5px;background:#4c4c4c"></div></div></div>
<div class="dock" style="left:735px;width:176px"><div class="dtitle"><div class="t" style="left:52px;top:3px;font-size:13px;letter-spacing:0.050px;">장면 전환</div><svg class="abs" style="left:159.5px;top:5.6px" width="9" height="8" viewBox="0 0 9 8"><rect x="0.5" y="0.5" width="5" height="4" fill="none" stroke="#d2d2d2"/><rect x="0" y="0" width="6" height="1.6" fill="#d2d2d2"/><rect x="3.5" y="3.5" width="5" height="4" fill="#474747" stroke="#d2d2d2"/><rect x="3" y="3" width="6" height="1.6" fill="#d2d2d2"/></svg></div><div class="dbody"><div class="abs" style="left:0;top:0;right:0;bottom:0;background:#3a393a"></div><div class="btn" style="left:4px;top:5px;width:142px;height:20px"></div><div class="abs" style="left:125px;top:5px;width:1px;height:20px;background:#3a393a"></div><svg class="abs" style="left:130px;top:9px" width="12" height="13"><path d="M3 4.2L6 1.3L9 4.2M3 8.8L6 11.7L9 8.8" fill="none" stroke="#c8c8c8" stroke-width="1"/></svg><div class="t" style="left:14px;top:8px;font-size:13px;letter-spacing:-0.086px;">서서히 사라지기</div><svg class="abs" style="left:152.79999999999995px;top:7px" width="16" height="16" viewBox="0 0 16 16"><path d="M6.93,2.61 L6.99,0.47 L9.01,0.47 L9.07,2.61 L11.06,3.43 L12.61,1.96 L14.04,3.39 L12.57,4.94 L13.39,6.93 L15.53,6.99 L15.53,9.01 L13.39,9.07 L12.57,11.06 L14.04,12.61 L12.61,14.04 L11.06,12.57 L9.07,13.39 L9.01,15.53 L6.99,15.53 L6.93,13.39 L4.94,12.57 L3.39,14.04 L1.96,12.61 L3.43,11.06 L2.61,9.07 L0.47,9.01 L0.47,6.99 L2.61,6.93 L3.43,4.94 L1.96,3.39 L3.39,1.96 L4.94,3.43Z M4.00,8.00 a4.0,4.0 0 1,0 8.0,0 a4.0,4.0 0 1,0 -8.0,0Z" fill="#d2d2d2" fill-rule="evenodd" stroke="#d2d2d2" stroke-width="0.9" stroke-linejoin="round"/></svg><div class="t" style="left:4px;top:31px;font-size:13px;letter-spacing:0.050px;">지속 기간</div><div class="abs" style="left:60.39999999999998px;top:28px;width:97px;height:21px;border-radius:4px;background:#1f1e1f"></div><div class="t" style="left:70px;top:30px;font-size:12px;letter-spacing:-0.020px;color:#fff;">300 ms</div><div class="abs" style="left:156px;top:28px;width:16px;height:10.2px;border-radius:0 3px 0 0;background:#4c4c4c"></div><div class="abs" style="left:156px;top:38.8px;width:16px;height:10.2px;border-radius:0 0 3px 0;background:#4c4c4c"></div><svg class="abs" style="left:156px;top:28px" width="16" height="21"><path d="M3.2 8L8 3.2L12.8 8M3.2 13.2L8 18L12.8 13.2" fill="none" stroke="#dcdcdc" stroke-width="1.5"/><path d="M0 10.5H16" stroke="#3a393a" stroke-width="0.8"/></svg></div></div>
<div class="dock" style="left:915px;width:160.5px"><div class="dtitle"><div class="t" style="left:59px;top:3px;font-size:13px;letter-spacing:0.700px;">제어</div><svg class="abs" style="left:144.0px;top:5.6px" width="9" height="8" viewBox="0 0 9 8"><rect x="0.5" y="0.5" width="5" height="4" fill="none" stroke="#d2d2d2"/><rect x="0" y="0" width="6" height="1.6" fill="#d2d2d2"/><rect x="3.5" y="3.5" width="5" height="4" fill="#474747" stroke="#d2d2d2"/><rect x="3" y="3" width="6" height="1.6" fill="#d2d2d2"/></svg></div><div class="dbody"><div class="abs" style="left:0;top:0;right:0;bottom:0;background:#3a393a"></div><div class="btn" style="left:4px;top:4px;width:156px;height:20px"></div><div class="t" style="left:56px;top:7px;font-size:13px;letter-spacing:-0.025px;">방송 시작</div><div class="btn" style="left:4px;top:26px;width:156px;height:20px"></div><div class="t" style="left:57px;top:29px;font-size:13px;letter-spacing:-0.275px;">녹화 시작</div><div class="btn" style="left:4px;top:48px;width:156px;height:20px"></div><div class="t" style="left:36px;top:51px;font-size:13px;letter-spacing:-0.088px;">가상 카메라 시작</div><div class="btn" style="left:4px;top:70px;width:156px;height:20px"></div><div class="t" style="left:56px;top:73px;font-size:13px;letter-spacing:0.125px;">편집 방식</div><div class="btn" style="left:4px;top:92px;width:156px;height:20px"></div><div class="t" style="left:70px;top:95px;font-size:13px;letter-spacing:0.400px;">설정</div><div class="btn" style="left:4px;top:114px;width:156px;height:20px"></div><div class="t" style="left:65px;top:117px;font-size:13px;letter-spacing:-0.300px;">끝내기</div></div></div>
<div id="status">
<svg class="abs" style="left:654px;top:5px" width="20" height="15" viewBox="0 0 20 15"><circle cx="10" cy="7.5" r="3.3" fill="#8a8a8a"/><g fill="none" stroke="#8a8a8a" stroke-width="1.2"><path d="M5.6 3.2a6.2 6.2 0 0 0 0 8.6M14.4 3.2a6.2 6.2 0 0 1 0 8.6"/><path d="M3 1.2a9.2 9.2 0 0 0 0 12.6M17 1.2a9.2 9.2 0 0 1 0 12.6"/></g></svg>
<div class="t" style="left:680px;top:4px;font-size:12px;letter-spacing:-0.031px;">LIVE: 00:00:00</div>
<div class="abs" style="left:768.5px;top:7.5px;width:10px;height:10px;border-radius:5px;background:#8a8a8a"></div>
<div class="t" style="left:789px;top:4px;font-size:12px;letter-spacing:-0.017px;">REC: 00:00:00</div>
<div class="t" style="left:894px;top:4px;font-size:12px;letter-spacing:-0.026px;">CPU: 1,7%, 60,00 fps</div>
</div>
<div class="abs" style="right:0;top:30px;width:1px;height:729px;background:#454a53"></div><div class="abs" style="right:0;top:51px;width:1px;height:468px;background:#5a6470"></div>
</div>
</body>
</html>
